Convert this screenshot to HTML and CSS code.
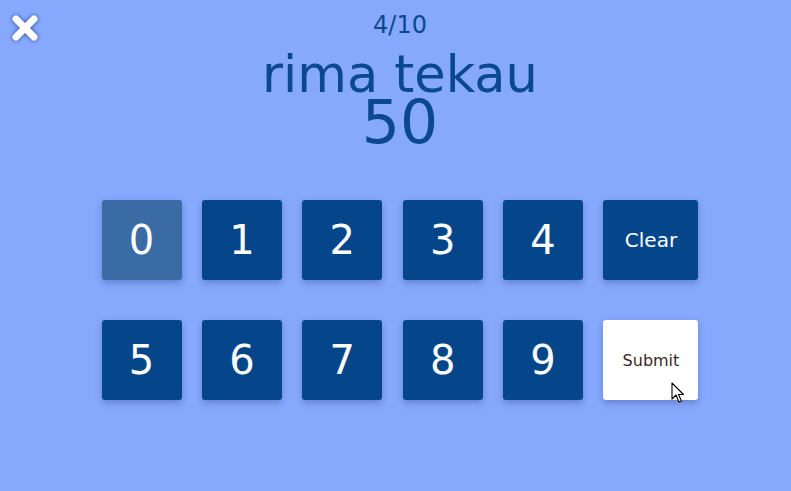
FILE: index.html
```html
<!DOCTYPE html>
<html>
<head>
<meta charset="utf-8">
<link rel="stylesheet" href="styles.css">
</head>
<body>
<div class="page">
  <button class="close" aria-label="close">
    <svg width="30" height="30" viewBox="0 0 30 30">
      <path d="M6 6 L24 24 M24 6 L6 24" stroke="#fff" stroke-width="7" stroke-linecap="round" fill="none"/>
    </svg>
  </button>
  <header class="head">
    <div class="progress">4/10</div>
    <div class="word">rima tekau</div>
    <div class="number">50</div>
  </header>
  <div class="pad">
    <div class="row">
      <button class="key key-active">0</button>
      <button class="key">1</button>
      <button class="key">2</button>
      <button class="key">3</button>
      <button class="key">4</button>
      <button class="key key-wide key-clear">Clear</button>
    </div>
    <div class="row">
      <button class="key">5</button>
      <button class="key">6</button>
      <button class="key">7</button>
      <button class="key">8</button>
      <button class="key">9</button>
      <button class="key key-wide key-submit">Submit
        <svg class="cursor" width="14" height="22" viewBox="0 0 14 22">
          <path d="M1 1 L1 17 L5 13 L8 20 L10.5 19 L7.5 12.5 L12.5 12.5 Z" fill="#fff" stroke="#000" stroke-width="1.1" stroke-linejoin="round"/>
        </svg>
      </button>
    </div>
  </div>
</div>
</body>
</html>
```
FILE: styles.css
```css
html, body {
  margin: 0;
  padding: 0;
}
html {
  overflow: hidden;
}
body {
  background: #87a9fd;
  font-family: "DejaVu Sans", sans-serif;
  height: 491px;
}
.page {
  position: relative;
  width: 800px;
  height: 491px;
}
.close {
  position: absolute;
  left: 10px;
  top: 13px;
  width: 30px;
  height: 30px;
  padding: 0;
  border: 0;
  background: none;
  filter: drop-shadow(0 0 2px rgba(10, 40, 120, 0.8));
}
.close svg {
  display: block;
}
.head {
  display: flex;
  flex-direction: column;
  align-items: center;
  color: #0a4892;
  padding-top: 12px;
}
.progress {
  font-size: 24px;
  line-height: 26px;
}
.word {
  font-size: 51px;
  line-height: 50px;
  margin-top: 12px;
}
.number {
  font-size: 60px;
  line-height: 50px;
  margin-top: -3px;
}
.pad {
  display: flex;
  flex-direction: column;
  align-items: center;
  gap: 40px;
  margin-top: 53px;
}
.row {
  display: flex;
  gap: 20.4px;
}
.key {
  position: relative;
  width: 80px;
  height: 80px;
  border: 0;
  border-radius: 3px;
  background: #05468b;
  color: #fff;
  font-family: "DejaVu Sans", sans-serif;
  font-size: 40px;
  padding: 0;
  box-shadow: 0 3px 7px rgba(20, 40, 100, 0.3);
  display: flex;
  align-items: center;
  justify-content: center;
}
.key-active {
  background: #3a6ba4;
}
.key-wide {
  width: 95px;
}
.key-clear {
  font-size: 20px;
}
.key-submit {
  background: #fff;
  color: #3a2626;
  font-size: 16px;
}
.cursor {
  position: absolute;
  left: 68px;
  top: 62px;
}
```
